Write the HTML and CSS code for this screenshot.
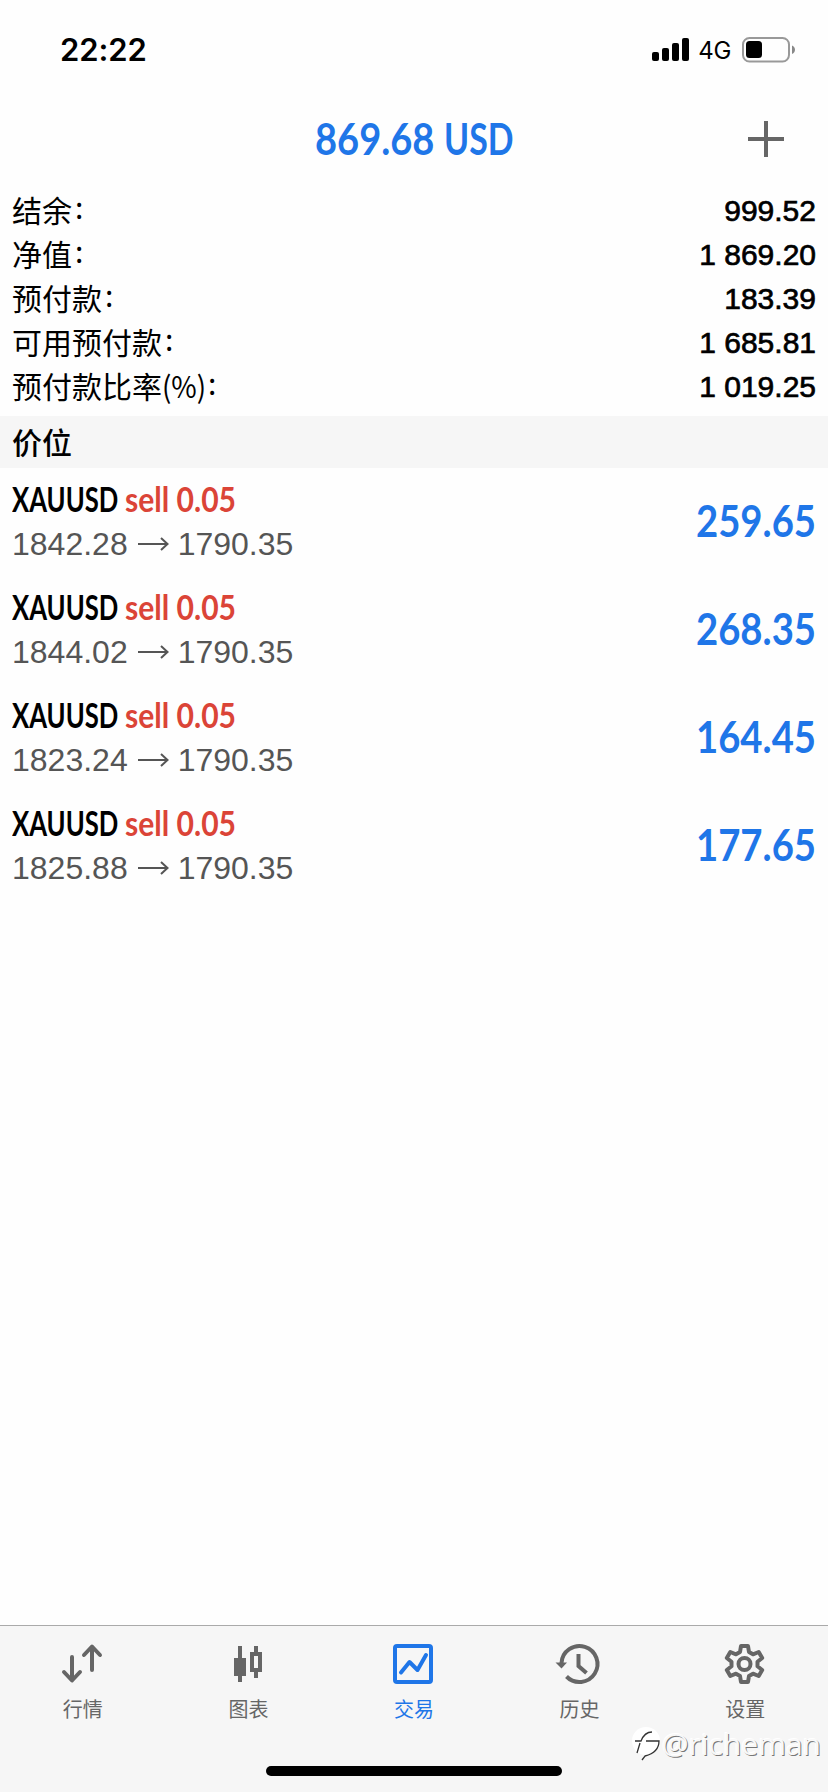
FILE: index.html
```html
<!DOCTYPE html>
<html lang="zh-CN">
<head>
<meta charset="utf-8">
<title>交易</title>
<link rel="stylesheet" href="styles.css">
</head>
<body>
<div class="app">
  <header class="status">
    <span class="time">22:22</span>
    <div class="status-right">
      <svg width="37" height="23" viewBox="0 0 37 23"><rect x="0" y="14" width="7" height="9" rx="2"/><rect x="10" y="10" width="7" height="13" rx="2"/><rect x="20" y="5" width="7" height="18" rx="2"/><rect x="30" y="0" width="7" height="23" rx="2"/></svg>
      <span class="network">4G</span>
      <svg width="53" height="26" viewBox="0 0 53 26"><rect x="1" y="1" width="46" height="23.5" rx="6.5" fill="none" stroke="#999" stroke-width="2"/><rect x="4" y="4" width="16" height="17" rx="3.5"/><path d="M50 8.500c4 1.500 4 7 0 8.500z" fill="#888"/></svg>
    </div>
  </header>
  <div class="title-bar">
    <h1 class="total"><span class="amount">869.68</span> <span class="currency">USD</span></h1>
    <svg class="add" width="36" height="36" viewBox="0 0 36 36"><path d="M18 0v36M0 18h36" stroke="#666" stroke-width="4"/></svg>
  </div>
  <section class="summary">
    <div class="line"><span class="label">结余<i>:</i></span><span class="value">999.52</span></div>
    <div class="line"><span class="label">净值<i>:</i></span><span class="value">1 869.20</span></div>
    <div class="line"><span class="label">预付款<i>:</i></span><span class="value">183.39</span></div>
    <div class="line"><span class="label">可用预付款<i>:</i></span><span class="value">1 685.81</span></div>
    <div class="line"><span class="label">预付款比率<b>(%)</b><i>:</i></span><span class="value">1 019.25</span></div>
  </section>
  <h2 class="section-title">价位</h2>
  <main class="positions">
    <article class="position"><div><p class="order"><span class="symbol">XAUUSD</span><span class="side">sell 0.05</span></p><p class="prices">1842.28<svg class="arrow" width="31" height="14" viewBox="0 0 31 14"><path d="M0 7h29M23 1l6.500 6-6.500 6"/></svg>1790.35</p></div><strong class="profit"><span>259.65</span></strong></article>
    <article class="position"><div><p class="order"><span class="symbol">XAUUSD</span><span class="side">sell 0.05</span></p><p class="prices">1844.02<svg class="arrow" width="31" height="14" viewBox="0 0 31 14"><path d="M0 7h29M23 1l6.500 6-6.500 6"/></svg>1790.35</p></div><strong class="profit"><span>268.35</span></strong></article>
    <article class="position"><div><p class="order"><span class="symbol">XAUUSD</span><span class="side">sell 0.05</span></p><p class="prices">1823.24<svg class="arrow" width="31" height="14" viewBox="0 0 31 14"><path d="M0 7h29M23 1l6.500 6-6.500 6"/></svg>1790.35</p></div><strong class="profit"><span>164.45</span></strong></article>
    <article class="position"><div><p class="order"><span class="symbol">XAUUSD</span><span class="side">sell 0.05</span></p><p class="prices">1825.88<svg class="arrow" width="31" height="14" viewBox="0 0 31 14"><path d="M0 7h29M23 1l6.500 6-6.500 6"/></svg>1790.35</p></div><strong class="profit"><span>177.65</span></strong></article>
  </main>
  <nav class="tabs">
    <a class="tab"><svg width="44" height="44" viewBox="0 0 44 44"><g fill="none" stroke="#666" stroke-width="4" stroke-linecap="round" stroke-linejoin="round"><path d="M11 15v23M3 30l8 8.500 8-8.500M31 28V5M23 13l8-8.500 8 8.500"/></g></svg><span>行情</span></a>
    <a class="tab"><svg width="44" height="44" viewBox="0 0 44 44"><path fill="#666" fill-rule="evenodd" d="M12 4h4v12h4v18h-4v6h-4v-6H8V16h4zM28 4h4v6h4v20h-4v6h-4v-6h-4V10h4zM28 14v12h4V14z"/></svg><span>图表</span></a>
    <a class="tab active"><svg width="44" height="44" viewBox="0 0 44 44"><g fill="none" stroke="#1f76e8" stroke-width="4" stroke-linecap="round" stroke-linejoin="round"><rect x="3" y="4" width="36" height="36" rx="2"/><path d="M9 30.500l8.500-10.500 8 8 8.500-15"/></g></svg><span>交易</span></a>
    <a class="tab"><svg width="44" height="44" viewBox="0 0 44 44"><path d="M3.500 21a18 18 0 1 1 5 13.500" fill="none" stroke="#666" stroke-width="4"/><path d="M-2.500 20.500h11.500l-5.500 6z" fill="#666"/><path d="M20.500 12v12l8 7" fill="none" stroke="#666" stroke-width="4"/></svg><span>历史</span></a>
    <a class="tab"><svg width="44" height="44" viewBox="0 0 44 44"><g fill="none" stroke="#666" stroke-width="4" stroke-linejoin="round"><path d="M18.500 4h7l1 6 4 2.300 5.700-2.300 3.500 6-4.700 3.700v4.600l4.700 3.700-3.500 6-5.700-2.300-4 2.300-1 6h-7l-1-6-4-2.300-5.700 2.300-3.500-6 4.700-3.700v-4.600l-4.700-3.700 3.500-6 5.700 2.300 4-2.300z" transform="translate(-.5 0)"/><circle cx="21.500" cy="22" r="6"/></g></svg><span>设置</span></a>
  </nav>
  <div class="home-indicator"></div>
  <div class="watermark"><svg width="30" height="32" viewBox="0 0 30 32"><circle cx="14" cy="13" r="14" fill="#fff"/><path d="M3 13h6c2-5 6-9 11-9M14 13h13c0 9-6 13-14 15l-3 4M8 15l-3 10" fill="none" stroke="#333" stroke-width="1.300"/></svg><span class="handle">@richeman</span></div>
</div>
</body>
</html>
```
FILE: styles.css
```css
* { box-sizing: border-box; }
body { margin: 0; background: #fff; color: #000; font-family: "Liberation Sans", "Noto Sans CJK SC", sans-serif; }
.app { position: relative; display: flex; flex-direction: column; width: 828px; height: 1792px; overflow: hidden; background: #fefefe; }
svg { display: block; flex: none; overflow: visible; }
h1, h2, p { margin: 0; }
.status { display: flex; justify-content: space-between; align-items: center; height: 99px; padding: 0 33px 0 60px; }
.time { font: 600 31px/40px Inter, sans-serif; letter-spacing: -.1px; }
.status-right { display: flex; align-items: center; }
.network { margin: 0 11px 0 9px; padding-top: 2px; font: 400 24px/30px Inter, sans-serif; letter-spacing: -.3px; }
.title-bar { display: grid; grid-template-columns: 1fr auto 1fr; align-items: center; height: 80px; padding: 0 44px; }
.total { display: flex; gap: 10px; grid-column: 2; width: 198px; padding-bottom: 3px; font: 700 44px/60px Lato, sans-serif; color: #1f76e8; white-space: nowrap; }
.amount { width: 119px; transform: scaleX(.865); transform-origin: left; }
.currency { transform: scaleX(.77); transform-origin: left; }
.add { justify-self: end; }
.summary { display: flex; flex-direction: column; height: 237px; padding: 9px 12px 0; }
.line { display: flex; justify-content: space-between; height: 44px; line-height: 44px; font-size: 30px; }
.label { margin-top: -1px; font-family: "Noto Sans CJK SC", sans-serif; }
.label b { display: inline-block; width: 43px; font-weight: 400; transform: scaleX(.92); transform-origin: left; }
.label i { font-style: normal; position: relative; top: -3px; margin-left: 3px; }
.value { padding-top: 1px; -webkit-text-stroke: .7px #000; }
.section-title { height: 52px; padding-left: 12px; background: #f6f6f6; font: 500 30px/51px "Noto Sans CJK SC", sans-serif; }
.positions { display: flex; flex-direction: column; }
.position { display: flex; justify-content: space-between; align-items: center; height: 108px; padding: 0 12px; }
.order { display: flex; height: 44px; font: 700 34px/42px Lato, sans-serif; white-space: nowrap; }
.symbol { width: 113px; transform: scaleX(.755); transform-origin: left; }
.side { color: #db4437; transform: scaleX(.885); transform-origin: left; }
.prices { display: flex; align-items: center; height: 44px; color: #555; font-size: 32px; line-height: 44px; }
.arrow { margin: 0 9px 0 10px; fill: none; stroke: #555; stroke-width: 2; }
.profit { padding-bottom: 4px; font: 700 44px/60px Lato, sans-serif; color: #1f76e8; }
.profit span { display: inline-block; transform: scaleX(.87); transform-origin: right; }
.tabs { display: flex; height: 167px; margin-top: auto; border-top: 1px solid #aaa; background: #f6f6f6; }
.tab { display: flex; flex: 1; flex-direction: column; align-items: center; padding-top: 16px; color: #666; font: 400 20px/30px "Noto Sans CJK SC", sans-serif; }
.tab span { margin-top: 8px; }
.active { color: #1f76e8; }
.home-indicator { position: absolute; left: 266px; top: 1766px; width: 296px; height: 10px; border-radius: 5px; background: #000; }
.watermark { position: absolute; right: 7px; top: 1724px; display: flex; align-items: center; height: 40px; }
.handle { color: #f8f8f8; font: 400 30px/40px "Open Sans", sans-serif; text-shadow: 1px .5px 0 #777, -1px -1px 0 #fff; }
```
